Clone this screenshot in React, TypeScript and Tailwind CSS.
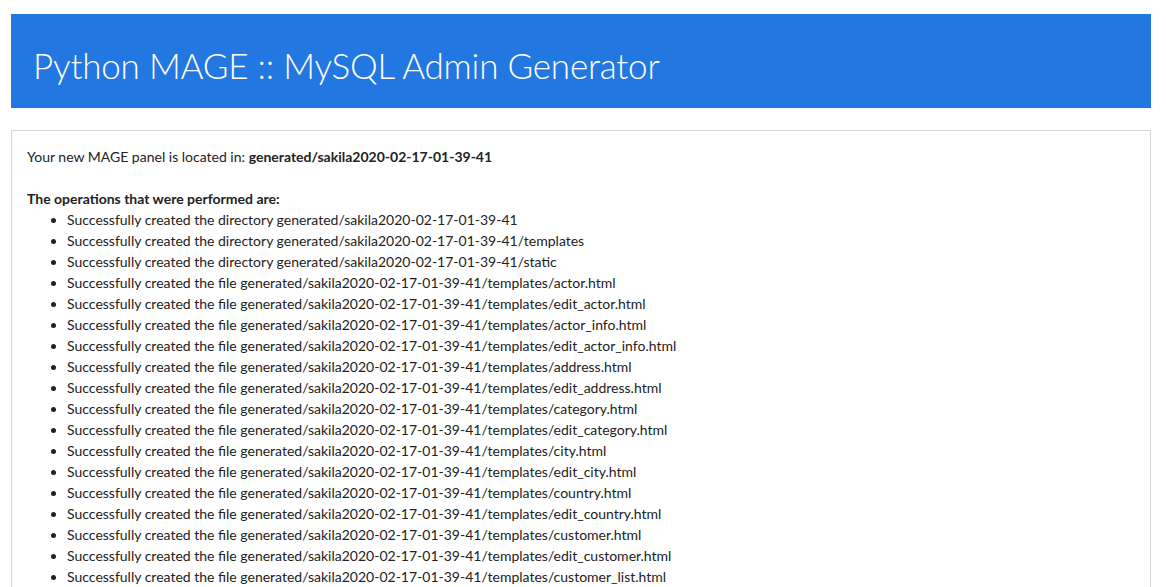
const base = 'generated/sakila2020-02-17-01-39-41';

const ops: string[] = [
  `Successfully created the directory ${base}`,
  `Successfully created the directory ${base}/templates`,
  `Successfully created the directory ${base}/static`,
  ...['actor', 'edit_actor', 'actor_info', 'edit_actor_info', 'address', 'edit_address', 'category', 'edit_category', 'city', 'edit_city', 'country', 'edit_country', 'customer', 'edit_customer', 'customer_list', 'edit_customer_list'].map(
    (t) => `Successfully created the file ${base}/templates/${t}.html`
  ),
];

export default function App() {
  return (
    <div className="min-h-screen bg-white pt-[14px] text-[#333] font-['Lato',sans-serif]">
      <div className="ml-[11px] w-[1140px]">
        {/* Header */}
        <div className="h-[94px] bg-[#2377e0] px-[22px] pt-[8px] flex items-center">
          <h1 className="text-white text-[35px] font-light tracking-[-0.2px]">Python MAGE :: MySQL Admin Generator</h1>
        </div>

        {/* Result panel */}
        <div className="mt-[22px] border border-[#d6d6d6] px-[15px] pt-[15px] pb-4 text-[14px] leading-[21px] text-[#222]">
          <p>
            Your new MAGE panel is located in: <b>{base}</b>
          </p>
          <br />
          <b>The operations that were performed are:</b>
          <ul className="list-disc pl-[40px]">
            {ops.map((op, i) => (
              <li key={i}>{op}</li>
            ))}
          </ul>
        </div>
      </div>
    </div>
  );
}
